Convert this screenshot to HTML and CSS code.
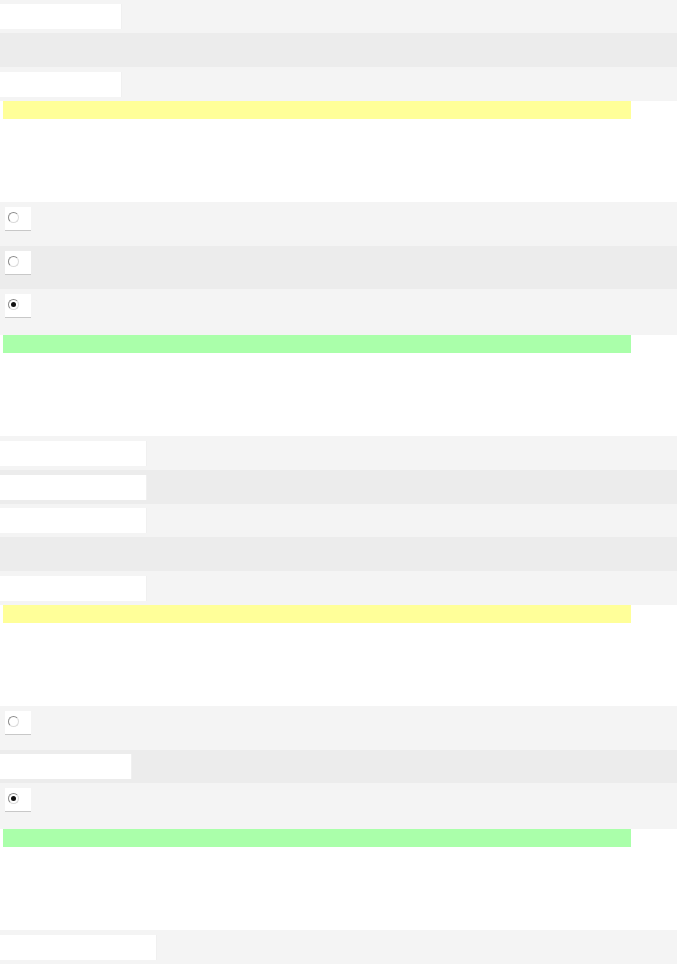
FILE: index.html
```html
<!DOCTYPE html>
<html lang="en">
<head>
    <meta charset="UTF-8">
    <meta name="viewport" content="width=device-width, initial-scale=1.0">
    <title>Form rows</title>
    <link rel="stylesheet" href="styles.css">
</head>
<body>
    <div class="section">
        <div class="row h33"><div class="field w122"></div></div>
        <div class="row alt h34"></div>
        <div class="row h34"><div class="field w122"></div></div>
        <div class="bar yellow"></div>
    </div>

    <div class="section">
        <div class="row radio-row h44">
            <div class="radio"><span class="dot"></span></div>
        </div>
        <div class="row alt radio-row h43">
            <div class="radio"><span class="dot"></span></div>
        </div>
        <div class="row radio-row h46">
            <div class="radio"><span class="dot checked"></span></div>
        </div>
        <div class="bar green"></div>
    </div>

    <div class="section">
        <div class="row h34"><div class="field w147"></div></div>
        <div class="row alt h34"><div class="field w147"></div></div>
        <div class="row h33"><div class="field w147"></div></div>
        <div class="row alt h34"></div>
        <div class="row h34"><div class="field w147"></div></div>
        <div class="bar yellow"></div>
    </div>

    <div class="section">
        <div class="row radio-row h44">
            <div class="radio"><span class="dot"></span></div>
        </div>
        <div class="row alt h33"><div class="field w132"></div></div>
        <div class="row radio-row h46">
            <div class="radio"><span class="dot checked"></span></div>
        </div>
        <div class="bar green"></div>
    </div>

    <div class="section last">
        <div class="row h34"><div class="field w157"></div></div>
    </div>
</body>
</html>
```

FILE: styles.css
```css
body {
    margin: 0;
    font-family: "Liberation Sans", Arial, sans-serif;
    background: #ffffff;
}
.section {
    margin-bottom: 83px;
}
.section.last {
    margin-bottom: 0;
}
.row {
    display: flex;
    align-items: center;
    background-color: #f4f4f4;
}
.row.alt {
    background-color: #ececec;
}
.h33 { height: 33px; }
.h34 { height: 34px; }
.h43 { height: 43px; }
.h44 { height: 44px; }
.h46 { height: 46px; }
.field {
    height: 25px;
    background-color: #ffffff;
    border-right: 1px solid #f0f0f0;
}
.w122 { width: 121px; }
.w132 { width: 131px; }
.w147 { width: 146px; }
.w157 { width: 156px; }
.radio-row {
    align-items: flex-start;
    padding-top: 5px;
    box-sizing: border-box;
}
.radio {
    margin-left: 5px;
    width: 26px;
    height: 23px;
    background-color: #ffffff;
    border-bottom: 1px solid #c8c8c8;
    position: relative;
}
.dot {
    position: absolute;
    left: 3px;
    top: 5px;
    width: 9px;
    height: 9px;
    border-radius: 50%;
    border: 1px solid #8a8a8a;
    border-right-color: #dadada;
    border-bottom-color: #dadada;
    background: #ffffff;
}
.dot.checked::after {
    content: "";
    position: absolute;
    left: 2px;
    top: 2px;
    width: 5px;
    height: 5px;
    border-radius: 50%;
    background: #111111;
}
.bar {
    margin-left: 3px;
    width: 628px;
    height: 18px;
}
.yellow {
    background-color: #ffff99;
}
.green {
    background-color: #aaffaa;
}
```
